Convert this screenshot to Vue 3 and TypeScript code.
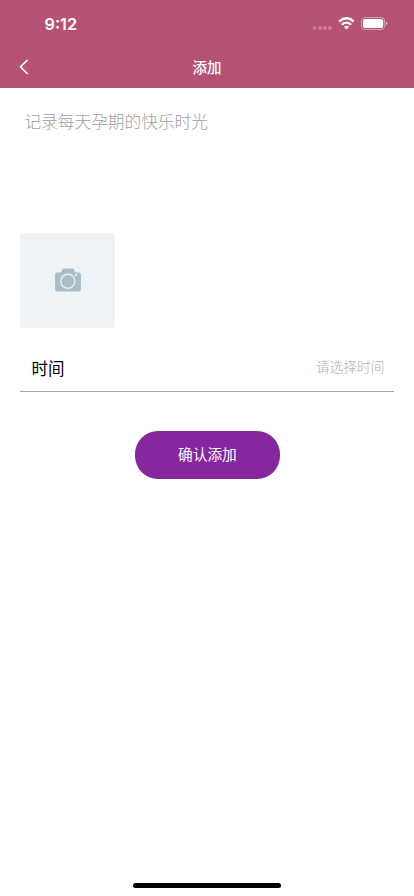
<script setup lang="ts">
import { ref } from 'vue'

const note = ref<string>('')
const time = ref<string>('')
const signalDots: number[] = [1, 2, 3, 4]
</script>

<template>
  <div class="screen">
    <header class="header">
      <div class="status">
        <span class="clock">9:12</span>
        <div class="indicators">
          <div class="signal"><i v-for="dot in signalDots" :key="dot" class="dot"></i></div>
          <svg class="wifi" width="17" height="13" viewBox="0 0 17 13" fill="none">
            <path d="M1.2 4.5Q8.5 -1.8 15.8 4.5" stroke="#fff" stroke-width="2.4" />
            <path d="M3.9 7.7Q8.5 3.6 13.1 7.7" stroke="#fff" stroke-width="2.2" />
            <path d="M5.9 9.8Q8.5 7.6 11.1 9.8L8.5 12.4Z" fill="#fff" />
          </svg>
          <svg class="battery" width="27" height="13" viewBox="0 0 27 13" fill="none">
            <rect x="0.5" y="0.5" width="23.2" height="12" rx="3.6" stroke="#fff" stroke-opacity="0.45" />
            <rect x="2" y="2" width="20.2" height="9" rx="2.2" fill="#fff" />
            <path d="M25 4.5V8.5Q26.4 7.7 26.4 6.5T25 4.5Z" fill="#fff" fill-opacity="0.55" />
          </svg>
        </div>
      </div>
      <div class="nav">
        <button class="back" type="button">
          <svg width="10" height="16" viewBox="0 0 10 16" fill="none">
            <path d="M8.2 1.3L1.5 7.9L8.2 14.5" stroke="#fff" stroke-width="1.6" stroke-linecap="round" stroke-linejoin="round" />
          </svg>
        </button>
        <h1 class="title">添加</h1>
      </div>
    </header>

    <main class="content">
      <textarea v-model="note" class="note" placeholder="记录每天孕期的快乐时光"></textarea>
      <button class="photo" type="button">
        <svg width="26" height="24" viewBox="0 0 26 24">
          <path d="M2.3 4.4H5.3Q6.3 4.4 6.5 3.4L6.8 2.1Q7.2 .5 8.8 .5H17.4Q19 .5 19.4 2.1L19.7 3.4Q19.9 4.4 20.9 4.4H23.7Q26 4.4 26 6.7V21.2Q26 23.5 23.7 23.5H2.3Q0 23.5 0 21.2V6.7Q0 4.4 2.3 4.4Z" fill="#abbdc7" />
          <circle cx="12.8" cy="13.2" r="7" fill="none" stroke="#eef3f7" stroke-width="1.4" />
          <circle cx="21" cy="6.9" r="1.1" fill="#eef3f7" />
        </svg>
      </button>
      <div class="row">
        <span class="label">时间</span>
        <span class="value">{{ time || '请选择时间' }}</span>
      </div>
      <button class="submit" type="button">确认添加</button>
    </main>

    <div class="home"></div>
  </div>
</template>

<style>
body {
  background: #fff;
}
</style>

<style scoped>
.screen {
  box-sizing: border-box;
  width: 100%;
  height: 896px;
  display: flex;
  flex-direction: column;
  overflow: hidden;
  background: #fff;
  font-family: "Noto Sans CJK SC", sans-serif;
}
button {
  border: 0;
  padding: 0;
  font-family: inherit;
}
.header {
  height: 88.4px;
  flex: none;
  background: #b55175;
  color: #fff;
}
.status {
  box-sizing: border-box;
  height: 46px;
  padding: 1px 26px 0 44.5px;
  display: flex;
  align-items: center;
  justify-content: space-between;
}
.clock {
  font: 600 16.3px/20px Inter, sans-serif;
  padding-top: 1px;
}
.indicators {
  display: flex;
  align-items: center;
}
.signal {
  display: flex;
  gap: 1.4px;
  padding-top: 9px;
  margin-right: 6px;
}
.dot {
  width: 3.8px;
  height: 3.8px;
  border-radius: 50%;
  background: rgba(255, 255, 255, 0.27);
}
.wifi {
  margin-right: 6px;
}
.nav {
  height: 42px;
  display: grid;
  grid-template-columns: 60px 1fr 60px;
  align-items: center;
}
.back {
  height: 42px;
  padding-left: 19px;
  display: flex;
  align-items: center;
  background: none;
}
.title {
  margin: 0;
  text-align: center;
  font-size: 14.5px;
  line-height: 20px;
  font-weight: 500;
}
.content {
  flex: 1;
  padding: 0 19.6px 0 20.4px;
  display: flex;
  flex-direction: column;
}
.note {
  box-sizing: border-box;
  display: block;
  width: 100%;
  height: 145px;
  padding: 20.6px 4px;
  border: 0;
  outline: 0;
  resize: none;
  background: none;
  font-family: inherit;
  font-size: 16.7px;
  font-weight: 300;
  line-height: 24px;
}
.note::placeholder {
  color: #a0a0a0;
  opacity: 1;
}
.photo {
  width: 95px;
  height: 95px;
  padding-bottom: 1.5px;
  border-radius: 3px;
  display: flex;
  align-items: center;
  justify-content: center;
  background: #eef3f7;
}
.row {
  box-sizing: border-box;
  height: 47px;
  margin-top: 16.6px;
  padding: 0 10px 0 11px;
  display: flex;
  align-items: center;
  justify-content: space-between;
  border-bottom: 1px solid #a9a9a9;
}
.label {
  font-size: 16.5px;
  color: #000;
}
.value {
  padding-bottom: 3px;
  font-size: 13.7px;
  font-weight: 300;
  color: #b0b0b0;
}
.submit {
  align-self: center;
  width: 145px;
  height: 48px;
  margin-top: 39px;
  padding-bottom: 2px;
  border-radius: 23px;
  background: #87279f;
  color: #fff;
  font-size: 14.7px;
}
.home {
  align-self: center;
  width: 148px;
  height: 5px;
  margin-bottom: 8px;
  border-radius: 3px;
  background: #000;
}
</style>
